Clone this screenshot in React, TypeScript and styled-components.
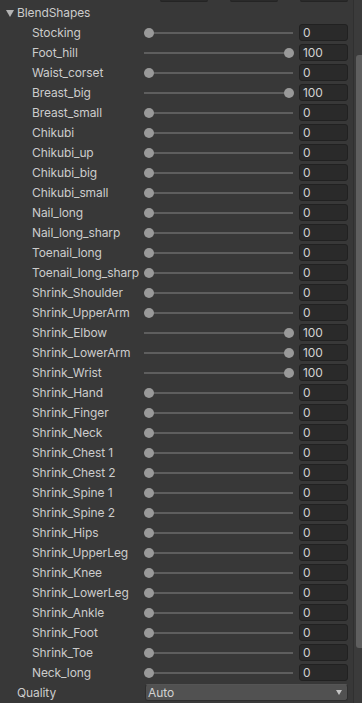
import React from "react";
import styled, { createGlobalStyle } from "styled-components";

const Global = createGlobalStyle`
  html, body { margin: 0; padding: 0; background: #383838; }
  body { font-family: Inter, "Noto Sans", "Liberation Sans", sans-serif; font-size: 12px; color: #cccccc; letter-spacing: -0.1px; }
  #root { width: 362px; height: 703px; overflow: hidden; }
`;

const Frame = styled.div`
  display: flex;
  width: 362px;
  height: 703px;
  background: #383838;
  overflow: hidden;
`;

const Content = styled.div`
  flex: 1;
  display: flex;
  flex-direction: column;
  padding-right: 5px;
`;

const TopStrip = styled.div`
  display: flex;
  justify-content: flex-end;
  gap: 22px;
  height: 3px;
`;

const StubButton = styled.div`
  width: 48px;
  height: 2px;
  background: #2a2a2a;
  border-bottom: 1px solid #242424;
  border-radius: 0 0 3px 3px;
  box-sizing: border-box;
`;

const Row = styled.div`
  display: grid;
  grid-template-columns: 141px 150px 49px;
  column-gap: 4px;
  height: 20px;
  align-items: center;
`;

const Label = styled.div<{ $indent: number }>`
  padding-left: ${(p) => p.$indent}px;
  white-space: nowrap;
  line-height: 20px;
  color: #cccccc;
`;

const Foldout = styled.div`
  display: flex;
  align-items: center;
  height: 20px;
  padding-left: 6px;
  gap: 3px;
  line-height: 20px;
  color: #cccccc;
`;

const Triangle = styled.span`
  width: 0;
  height: 0;
  border-left: 4px solid transparent;
  border-right: 4px solid transparent;
  border-top: 7px solid #b4b4b4;
  margin-top: 1px;
`;

const Slider = styled.div`
  position: relative;
  height: 20px;
  margin-top: -1px;
`;

const Track = styled.div`
  position: absolute;
  left: -1px;
  right: 2px;
  top: 9px;
  height: 2px;
  background: #5e5e5e;
`;

const Knob = styled.div`
  position: absolute;
  top: 5px;
  width: 10px;
  height: 10px;
  border-radius: 50%;
  background: #999999;
`;

const Field = styled.div`
  height: 17px;
  box-sizing: border-box;
  background: #2a2a2a;
  border: 1px solid #212121;
  border-radius: 3px;
  padding-left: 3px;
  line-height: 15px;
  color: #d2d2d2;
  margin-top: -2px;
`;

const Dropdown = styled.div`
  grid-column: 2 / 4;
  height: 17px;
  box-sizing: border-box;
  background: #515151;
  border: 1px solid #2e2e2e;
  border-top-color: #555;
  border-radius: 3px;
  padding: 0 5px 0 2px;
  display: flex;
  align-items: center;
  justify-content: space-between;
  color: #d2d2d2;
  margin-top: -2px;
`;

const Arrow = styled.span`
  width: 0;
  height: 0;
  border-left: 3.5px solid transparent;
  border-right: 3.5px solid transparent;
  border-top: 5px solid #c4c4c4;
`;

const Scrollbar = styled.div`
  width: 9px;
  box-sizing: border-box;
  border-left: 1px solid #303030;
  background: #3b3b3b;
  padding-top: 55px;
  display: flex;
  justify-content: flex-end;
`;

const Thumb = styled.div`
  width: 6px;
  height: 593px;
  background: #5f5f5f;
  border-radius: 3px 0 0 3px;
`;

const items: [string, number][] = [
  ["Stocking", 0],
  ["Foot_hill", 100],
  ["Waist_corset", 0],
  ["Breast_big", 100],
  ["Breast_small", 0],
  ["Chikubi", 0],
  ["Chikubi_up", 0],
  ["Chikubi_big", 0],
  ["Chikubi_small", 0],
  ["Nail_long", 0],
  ["Nail_long_sharp", 0],
  ["Toenail_long", 0],
  ["Toenail_long_sharp", 0],
  ["Shrink_Shoulder", 0],
  ["Shrink_UpperArm", 0],
  ["Shrink_Elbow", 100],
  ["Shrink_LowerArm", 100],
  ["Shrink_Wrist", 100],
  ["Shrink_Hand", 0],
  ["Shrink_Finger", 0],
  ["Shrink_Neck", 0],
  ["Shrink_Chest 1", 0],
  ["Shrink_Chest 2", 0],
  ["Shrink_Spine 1", 0],
  ["Shrink_Spine 2", 0],
  ["Shrink_Hips", 0],
  ["Shrink_UpperLeg", 0],
  ["Shrink_Knee", 0],
  ["Shrink_LowerLeg", 0],
  ["Shrink_Ankle", 0],
  ["Shrink_Foot", 0],
  ["Shrink_Toe", 0],
  ["Neck_long", 0],
];

export default function App() {
  return (
    <>
      <Global />
      <Frame>
        <Content>
          <TopStrip>
            <StubButton />
            <StubButton />
            <StubButton />
          </TopStrip>
          <Foldout>
            <Triangle />
            <span>BlendShapes</span>
          </Foldout>
          {items.map(([name, v]) => (
            <Row key={name}>
              <Label $indent={32}>{name}</Label>
              <Slider>
                <Track />
                <Knob style={{ left: `${-1 + v * 1.4}px` }} />
              </Slider>
              <Field>{v}</Field>
            </Row>
          ))}
          <Row>
            <Label $indent={17}>Quality</Label>
            <Dropdown>
              <span>Auto</span>
              <Arrow />
            </Dropdown>
          </Row>
        </Content>
        <Scrollbar>
          <Thumb />
        </Scrollbar>
      </Frame>
    </>
  );
}
